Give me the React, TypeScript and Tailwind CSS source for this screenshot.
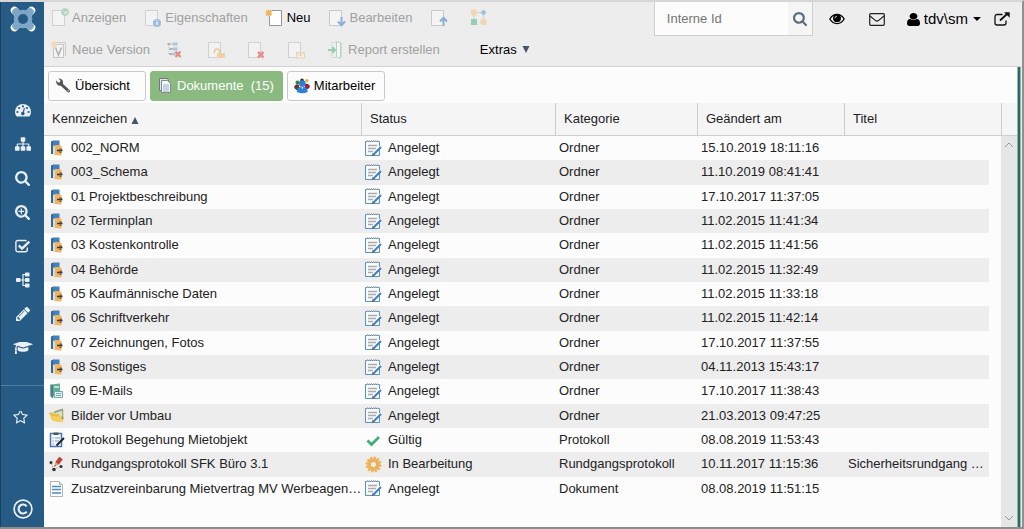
import type { ReactNode } from 'react';

interface IconProps {
  className?: string;
}

interface Row {
  icon: ReactNode;
  name: string;
  status: 'Angelegt' | 'Gültig' | 'In Bearbeitung';
  category: string;
  changed: string;
  title?: string;
}

/* Sidebar icons */

function Logo() {
  return (
    <svg viewBox="0 0 26 26" className="size-[26px]">
      <path d="M4.500 4.500l17 17M21.500 4.500l-17 17" stroke="#fff" strokeWidth="7.500" strokeLinecap="round" />
      <path d="M6 6l14 14M20 6L6 20" stroke="#7ea6c6" strokeWidth="7.500" strokeLinecap="round" />
      <circle cx="13" cy="13" r="9.300" fill="#7ea6c6" />
      <circle cx="13" cy="13" r="5" fill="#265b85" />
    </svg>
  );
}

function GaugeIcon() {
  return (
    <svg viewBox="0 0 16 14" className="h-3.5 w-4">
      <path d="M8 1a8 8 0 0 0-8 8q0 2.200 1.200 4.100.2.300.6.300h12.400q.4 0 .6-.3Q16 11.200 16 9a8 8 0 0 0-8-8z" fill="#e9eff4" />
      <g fill="#265b85">
        <circle cx="2.400" cy="9" r="1.100" />
        <circle cx="4.100" cy="5" r="1.100" />
        <circle cx="8" cy="3.400" r="1.100" />
        <circle cx="11.900" cy="5" r="1.100" />
        <circle cx="13.600" cy="9" r="1.100" />
        <circle cx="7.800" cy="10.600" r="1.800" />
      </g>
      <path d="M8 10.500L9.300 5.500" stroke="#265b85" strokeWidth="1.100" strokeLinecap="round" />
    </svg>
  );
}

function SitemapIcon() {
  return (
    <svg viewBox="0 128 1792 1536" className="h-3.5 w-4" fill="currentColor">
      <path d="M1792 1248v320q0 40-28 68t-68 28h-320q-40 0-68-28t-28-68v-320q0-40 28-68t68-28h96v-192h-512v192h96q40 0 68 28t28 68v320q0 40-28 68t-68 28h-320q-40 0-68-28t-28-68v-320q0-40 28-68t68-28h96v-192h-512v192h96q40 0 68 28t28 68v320q0 40-28 68t-68 28h-320q-40 0-68-28t-28-68v-320q0-40 28-68t68-28h96v-192q0-52 38-90t90-38h512v-192h-96q-40 0-68-28t-28-68v-320q0-40 28-68t68-28h320q40 0 68 28t28 68v320q0 40-28 68t-68 28h-96v192h512q52 0 90 38t38 90v192h96q40 0 68 28t28 68z" />
    </svg>
  );
}

function SearchIcon({ className = 'size-4' }: IconProps) {
  return (
    <svg viewBox="64 128 1664 1664" className={className} fill="currentColor">
      <path d="M1216 832q0-185-131.500-316.500t-316.500-131.500-316.500 131.500-131.500 316.500 131.500 316.500 316.500 131.500 316.500-131.500 131.500-316.500zm512 832q0 52-38 90t-90 38q-54 0-90-38l-343-342q-179 124-399 124-143 0-273.500-55.500t-225-150-150-225-55.500-273.500 55.500-273.500 150-225 225-150 273.500-55.500 273.500 55.500 225 150 150 225 55.500 273.500q0 220-124 399l343 343q37 37 37 90z" />
    </svg>
  );
}

function ZoomInIcon() {
  return (
    <svg viewBox="64 128 1664 1664" className="size-[15px]" fill="currentColor">
      <path d="M1088 800v64q0 13-9.500 22.500t-22.500 9.500h-224v224q0 13-9.500 22.500t-22.500 9.500h-64q-13 0-22.500-9.500t-9.500-22.500v-224h-224q-13 0-22.500-9.500t-9.500-22.500v-64q0-13 9.500-22.500t22.500-9.500h224v-224q0-13 9.500-22.500t22.500-9.500h64q13 0 22.500 9.500t9.500 22.500v224h224q13 0 22.500 9.500t9.500 22.500zm128 32q0-185-131.500-316.500t-316.500-131.500-316.500 131.500-131.500 316.500 131.500 316.500 316.500 131.500 316.500-131.500 131.500-316.500zm512 832q0 53-37.500 90.500t-90.500 37.500q-54 0-90-38l-343-342q-179 124-399 124-143 0-273.500-55.500t-225-150-150-225-55.500-273.500 55.500-273.500 150-225 225-150 273.500-55.500 273.500 55.500 225 150 150 225 55.500 273.500q0 220-124 399l343 343q37 37 37 90z" />
    </svg>
  );
}

function CheckSquareIcon() {
  return (
    <svg viewBox="0 0 16 14" className="h-3.5 w-4" fill="none" stroke="currentColor">
      <path d="M12.300 8.500v2.300a2 2 0 0 1-2 2H2.900a2 2 0 0 1-2-2V3.500a2 2 0 0 1 2-2h7.400q.6 0 1.200.3" strokeWidth="1.400" />
      <path d="M3.700 6.300l3.300 3.300L14.300 2.600" strokeWidth="2.400" />
    </svg>
  );
}

function TreeIcon() {
  return (
    <svg viewBox="0 0 16 16" className="size-4" fill="currentColor">
      <rect x="1" y="6" width="4.500" height="4" rx=".8" />
      <rect x="10" y="0.500" width="4.500" height="4" rx=".8" />
      <rect x="10" y="6" width="4.500" height="4" rx=".8" />
      <rect x="10" y="11.500" width="4.500" height="4" rx=".8" />
      <path d="M5 8h6M8 2.500h3M8 13.500h3M8 2v12" fill="none" stroke="currentColor" strokeWidth="1.200" />
    </svg>
  );
}

function PencilIcon() {
  return (
    <svg viewBox="128 149 1515 1515" className="size-3.5" fill="currentColor">
      <path d="M491 1536l91-91-235-235-91 91v107h128v128h107zm523-928q0-22-22-22-10 0-17 7l-542 542q-7 7-7 17 0 22 22 22 10 0 17-7l542-542q7-7 7-17zm-54-192l416 416-832 832h-416v-416zm683 96q0 53-37 90l-166 166-416-416 166-165q36-38 90-38 53 0 91 38l235 234q37 39 37 91z" />
    </svg>
  );
}

function GraduationIcon() {
  return (
    <svg viewBox="0 256 2304 1408" className="h-3 w-5" fill="currentColor">
      <path d="M1774 836l18 316q4 69-82 128t-235 93.500-323 34.500-323-34.500-235-93.500-82-128l18-316 574 181q22 7 48 7t48-7zm530-324q0 23-22 31l-1120 352q-4 1-10 1t-10-1l-652-206q-43 34-71 111.500t-34 178.500q63 36 63 109 0 69-58 107l58 433q2 14-8 25-9 11-24 11h-192q-15 0-24-11-10-11-8-25l58-433q-58-38-58-107 0-73 65-111 11-207 98-330l-333-104q-22-8-22-31t22-31l1120-352q4-1 10-1t10 1l1120 352q22 8 22 31z" />
    </svg>
  );
}

function StarIcon() {
  return (
    <svg viewBox="64 192 1664 1600" className="h-3.5 w-[15px]" fill="currentColor">
      <path d="M1201 1004l306-297-422-62-189-382-189 382-422 62 306 297-73 421 378-199 377 199zm527-357q0 22-26 48l-363 354 86 500q1 7 1 20 0 50-41 50-19 0-40-12l-449-236-449 236q-22 12-40 12-21 0-31.500-14.500t-10.500-35.500q0-6 2-20l86-500-364-354q-25-27-25-48 0-37 56-46l502-73 225-455q19-41 49-41t49 41l225 455 502 73q56 9 56 46z" />
    </svg>
  );
}

function CopyrightIcon() {
  return (
    <svg viewBox="0 0 20 20" className="size-5" fill="none" stroke="currentColor">
      <circle cx="10" cy="10" r="8.900" strokeWidth="1.700" />
      <path d="M13.700 7.300a4.500 4.500 0 1 0 0 5.400" strokeWidth="2.200" />
    </svg>
  );
}

/* Toolbar icons, all drawn on a 20x20 grid */

function Sheet({ children, className = 'opacity-50' }: { children?: ReactNode; className?: string }) {
  return (
    <svg viewBox="0 0 20 20" className={`size-5 shrink-0 ${className}`}>
      <path d="M2.500 2.500h12v15h-12z" fill="#fafafa" stroke="#b4b4b4" />
      {children}
    </svg>
  );
}

const showIcon = (
  <Sheet>
    <circle cx="15" cy="4" r="3.800" fill="#6fba94" />
    <path d="M13 2.500l3.500 3M14 5.500h2.600V3" stroke="#d5efe2" fill="none" />
  </Sheet>
);

const infoIcon = (
  <Sheet>
    <circle cx="14" cy="15" r="4" fill="#4a8cd0" />
    <path d="M14 14v3.200M14 12v1.200" stroke="#fff" strokeWidth="1.400" />
  </Sheet>
);

const newIcon = (
  <svg viewBox="0 0 20 20" className="size-5 shrink-0">
    <path d="M4.500 2.500h12v15h-12z" fill="#fff" stroke="#969696" />
    <circle cx="3.800" cy="5" r="3.400" fill="#ededed" />
    <path d="M3.800 1.500v7M.3 5h7M1.300 2.500l5 5M6.300 2.500l-5 5" stroke="#eba53c" strokeWidth="1.100" />
    <circle cx="3.800" cy="5" r="1.700" fill="#f5b957" />
  </svg>
);

const editIcon = (
  <Sheet className="opacity-60">
    <path d="M14.500 9v8M11 13.500l3.500 3.800 3.500-3.800" stroke="#4a86ca" strokeWidth="2" fill="none" />
  </Sheet>
);

const checkInIcon = (
  <Sheet className="opacity-60">
    <path d="M14.500 18v-8M11 13.500l3.500-3.800 3.500 3.800" stroke="#4a86ca" strokeWidth="2" fill="none" />
  </Sheet>
);

const flowIcon = (
  <svg viewBox="0 0 20 20" className="size-5 shrink-0 opacity-60">
    <path d="M4 4.500h10M13.500 5v9M4 6v8" stroke="#b9c3cc" />
    <circle cx="4" cy="4.500" r="3.200" fill="#f4c48b" />
    <path d="M13.500 1.500l3 3-3 3-3-3z" fill="#6da4d4" />
    <rect x="1" y="11" width="6" height="6" fill="#62b98c" />
    <circle cx="13.500" cy="14" r="3.200" fill="#f4c48b" />
  </svg>
);

const versionIcon = (
  <svg viewBox="0 0 20 20" className="size-5 shrink-0 opacity-60">
    <path d="M5.500 2.500h10v13" fill="none" stroke="#b5b5b5" />
    <path d="M3.500 4.500h10v13h-10z" fill="#fafafa" stroke="#aaa" />
    <path d="M5.500 7.500l3 7.500 3-7.500" stroke="#8c8c8c" strokeWidth="1.600" fill="none" />
    <circle cx="4.500" cy="4.500" r="3" fill="#f5cf98" />
  </svg>
);

const removeStructureIcon = (
  <svg viewBox="0 0 20 20" className="size-5 shrink-0 opacity-60">
    <path d="M3 3v12M3 4h4M3 9h4M3 14h4" stroke="#999" strokeDasharray="1 1" />
    <path d="M6.500 4h5M6.500 9h5M6.500 14h3" stroke="#8aa9c6" strokeWidth="3" />
    <path d="M1.500 4h3M3.500 9h3M3.500 14h3" stroke="#888" strokeWidth="2" />
    <path d="M9.500 11.500l5 5.500M14.500 11.500l-5 5.500" stroke="#de4a3f" strokeWidth="2.200" />
  </svg>
);

const unlockIcon = (
  <Sheet>
    <path d="M8.500 13v-1.500a2.500 2.500 0 0 1 5 0V14" stroke="#eca94c" strokeWidth="1.500" fill="none" />
    <rect x="11" y="13" width="8" height="5" fill="#f3b661" />
  </Sheet>
);

const deleteIcon = (
  <Sheet>
    <path d="M12 12l5.500 5.500M17.500 12L12 17.500" stroke="#db3a30" strokeWidth="2.500" />
  </Sheet>
);

const mailIcon = (
  <Sheet>
    <path d="M10.500 12.500h8v5.500h-8zM10.500 12.500l4 3.500 4-3.500" stroke="#efb870" fill="#fdf3e0" />
  </Sheet>
);

const reportIcon = (
  <svg viewBox="0 0 20 20" className="size-5 shrink-0 opacity-50">
    <path d="M5.500 6V2.500h5M5.500 14v3.500h5M15.500 3v14.500" stroke="#b5b5b5" fill="none" strokeDasharray="2 1" />
    <path d="M10.500 1.500l4 1.500v15l-4-1z" fill="#fff" stroke="#7abf9c" />
    <path d="M2 10h7M6 7l3 3-3 3" stroke="#46aa79" strokeWidth="2" fill="none" />
  </svg>
);

/* Tab icons */

const wrenchIcon = (
  <svg viewBox="0 0 16 16" className="size-4 shrink-0">
    <path d="M6.500 6.500l7 6.500" stroke="#555" strokeWidth="3" strokeLinecap="round" />
    <path d="M.8 2.200L3.200 4.600 5 4.200 5.300 2.300 3.300.4Q7 .2 8 3.400 8.500 6.500 5.500 7.800 1.500 8 .8 2.200z" fill="#555" />
    <circle cx="13.200" cy="12.700" r=".7" fill="#ccc" />
  </svg>
);

const documentTabIcon = (
  <svg viewBox="0 0 16 16" className="size-4 shrink-0">
    <path d="M2.500.5h8l1 2v10h-9z" fill="#dce8ee" stroke="#777" />
    <path d="M4.500 2.500h6l3 3v9h-9z" fill="#f4f8fb" stroke="#888" />
    <path d="M6 7h6M6 9h6M6 11h6M6 13h6" stroke="#8fb3d4" />
  </svg>
);

const peopleIcon = (
  <svg viewBox="0 0 16 16" className="size-4 shrink-0">
    <circle cx="3.500" cy="4.500" r="2" fill="#35843b" />
    <circle cx="8" cy="2.300" r="1.800" fill="#333" />
    <circle cx="12.800" cy="2.700" r="1.800" fill="#e3bd35" />
    <path d="M0 9q2-4 5-2v4H1z" fill="#8d2029" />
    <path d="M11 6q4-1 5 3l-2 2h-3z" fill="#a3203e" />
    <path d="M1 9h4v3H2z" fill="#23642e" />
    <circle cx="8.300" cy="5.500" r="3.300" fill="#2e7fd6" />
    <path d="M3 14q-.5-5.500 5.300-5.500T13.500 14q-5 2.500-10.500 0z" fill="#2e7fd6" />
    <path d="M7.400 9h1.700l-.9 2.500z" fill="#fff" />
  </svg>
);

/* Table icons */

const folderIcon = (
  <svg viewBox="0 0 16 16" className="size-4 shrink-0">
    <path d="M2 1.500l2.500-1v13.500L2 14z" fill="#2e68a5" />
    <path d="M4 .5h6.500v13H4z" fill="#4580bd" />
    <path d="M5.500 5h5l2 1v9.500l-7-.5z" fill="#f0b55e" />
    <path d="M4 5.500l2 1v9L4 14.500z" fill="#dcdcdc" />
    <path d="M8 10.500h5.500" stroke="#3c3a3a" strokeWidth="1.600" />
    <path d="M10.500 8.500h2.500v1.500h-2.500zM10.500 11.500h2V13h-2z" fill="#75603f" />
  </svg>
);

const mailFolderIcon = (
  <svg viewBox="0 0 16 16" className="size-4 shrink-0">
    <path d="M1.500 1.500L11 .5v13H3.500l-2-1.500z" fill="#68ad91" />
    <path d="M1.500 1.500l2.500 1v13L1.500 13.500z" fill="#417f92" />
    <path d="M5 4h5" stroke="#d8eee4" strokeWidth="1.500" />
    <path d="M5.500 8.500h8v6h-8zM7 10.500h5M7 12.500h5" fill="#e9f4f2" stroke="#6fa9a5" />
  </svg>
);

const picturesIcon = (
  <svg viewBox="0 0 16 16" className="size-4 shrink-0">
    <path d="M5 3.500l9-3 .5 11-7 2z" fill="#8f9c76" />
    <path d="M6 5l7-2.500.5 6-7 1z" fill="#d8e2bf" />
    <path d="M0 4.500h4l1.500 2L10 6l2 8-9-2z" fill="#e9bb42" />
    <path d="M0 4.500L3 8l9 .5 2.500 6L4 13z" fill="#f5cf5b" />
  </svg>
);

const protocolIcon = (
  <svg viewBox="0 0 16 16" className="size-4 shrink-0">
    <path d="M1.500 1.500h11v13h-11z" fill="#f5f8fc" stroke="#4b76b1" strokeWidth="1.500" />
    <path d="M4.500.5h5V3h-5z" fill="#555" />
    <path d="M3.500 6h1.500M6 6h5M3.500 9h1.500M6 9h4M3.500 12h1.500" stroke="#6f9fcd" strokeWidth="1.200" />
    <path d="M7.500 13.500L15 6" stroke="#222" strokeWidth="2" />
  </svg>
);

const inspectionIcon = (
  <svg viewBox="0 0 16 16" className="size-4 shrink-0">
    <path d="M2 6.500l2.500 7L12 10" stroke="#999" strokeDasharray="1 1" fill="none" />
    <circle cx="2" cy="6.500" r="1.500" fill="#333" />
    <circle cx="5" cy="13.500" r="1.800" fill="#333" />
    <circle cx="12" cy="10.500" r="1.600" fill="#333" />
    <path d="M8 7.500L12 2" stroke="#bf4438" strokeWidth="4.500" />
    <path d="M5.500 10.500l.7-4.500L9.700 8.500z" fill="#d9a47b" />
    <path d="M5.300 10.800l.4-1.800 1.100.8z" fill="#333" />
  </svg>
);

const documentIcon = (
  <svg viewBox="0 0 16 16" className="size-4 shrink-0">
    <path d="M1.500.5h9l3 3v12h-12z" fill="#fff" stroke="#b1b5b9" />
    <path d="M10.500.5v3h3" fill="#eee" stroke="#b1b5b9" />
    <path d="M3 5.500h9M3 8.500h9M3 12h9" stroke="#4e8ac4" strokeWidth="1.600" />
  </svg>
);

const statusIcons = {
  Angelegt: (
    <svg viewBox="0 0 17 17" className="size-[17px] shrink-0">
      <path d="M14.500 9v6.500h-14v-14h14V6" fill="#f8fafc" stroke="#5590cf" />
      <path d="M2 1h12" stroke="#b5b5b5" strokeWidth="2" strokeDasharray="1 1" />
      <path d="M3 5.500h9M3 8.500h8M3 11.500h5" stroke="#ababab" strokeWidth="1.600" />
      <path d="M8.500 14.500L16 7" stroke="#3f7fc5" strokeWidth="2" />
      <path d="M6.500 16l1.200-3 2 2z" fill="#666" />
    </svg>
  ),
  Gültig: (
    <svg viewBox="0 0 17 17" className="size-[17px] shrink-0">
      <path d="M2.500 8.500l4 4L14 5" fill="none" stroke="#43ab7c" strokeWidth="2.700" />
    </svg>
  ),
  'In Bearbeitung': (
    <svg viewBox="0 0 17 17" className="size-[17px] shrink-0">
      <circle cx="8.500" cy="8.500" r="4.500" fill="none" stroke="#edb35c" strokeWidth="4" />
      <circle cx="8.500" cy="8.500" r="6.900" fill="none" stroke="#edb35c" strokeWidth="2.200" strokeDasharray="2.160 1.450" />
    </svg>
  ),
};

const sidebarItems = [
  { label: 'Dashboard', icon: <GaugeIcon /> },
  { label: 'Struktur', icon: <SitemapIcon /> },
  { label: 'Suche', icon: <SearchIcon className="size-[15px]" /> },
  { label: 'Erweiterte Suche', icon: <ZoomInIcon /> },
  { label: 'Aufgaben', icon: <CheckSquareIcon /> },
  { label: 'Prozesse', icon: <TreeIcon /> },
  { label: 'Bearbeiten', icon: <PencilIcon /> },
  { label: 'Schulung', icon: <GraduationIcon /> },
];

const rows: Row[] = [
  { icon: folderIcon, name: '002_NORM', status: 'Angelegt', category: 'Ordner', changed: '15.10.2019 18:11:16' },
  { icon: folderIcon, name: '003_Schema', status: 'Angelegt', category: 'Ordner', changed: '11.10.2019 08:41:41' },
  { icon: folderIcon, name: '01 Projektbeschreibung', status: 'Angelegt', category: 'Ordner', changed: '17.10.2017 11:37:05' },
  { icon: folderIcon, name: '02 Terminplan', status: 'Angelegt', category: 'Ordner', changed: '11.02.2015 11:41:34' },
  { icon: folderIcon, name: '03 Kostenkontrolle', status: 'Angelegt', category: 'Ordner', changed: '11.02.2015 11:41:56' },
  { icon: folderIcon, name: '04 Behörde', status: 'Angelegt', category: 'Ordner', changed: '11.02.2015 11:32:49' },
  { icon: folderIcon, name: '05 Kaufmännische Daten', status: 'Angelegt', category: 'Ordner', changed: '11.02.2015 11:33:18' },
  { icon: folderIcon, name: '06 Schriftverkehr', status: 'Angelegt', category: 'Ordner', changed: '11.02.2015 11:42:14' },
  { icon: folderIcon, name: '07 Zeichnungen, Fotos', status: 'Angelegt', category: 'Ordner', changed: '17.10.2017 11:37:55' },
  { icon: folderIcon, name: '08 Sonstiges', status: 'Angelegt', category: 'Ordner', changed: '04.11.2013 15:43:17' },
  { icon: mailFolderIcon, name: '09 E-Mails', status: 'Angelegt', category: 'Ordner', changed: '17.10.2017 11:38:43' },
  { icon: picturesIcon, name: 'Bilder vor Umbau', status: 'Angelegt', category: 'Ordner', changed: '21.03.2013 09:47:25' },
  { icon: protocolIcon, name: 'Protokoll Begehung Mietobjekt', status: 'Gültig', category: 'Protokoll', changed: '08.08.2019 11:53:43' },
  {
    icon: inspectionIcon,
    name: 'Rundgangsprotokoll SFK Büro 3.1',
    status: 'In Bearbeitung',
    category: 'Rundgangsprotokoll',
    changed: '10.11.2017 11:15:36',
    title: 'Sicherheitsrundgang …',
  },
  {
    icon: documentIcon,
    name: 'Zusatzvereinbarung Mietvertrag MV Werbeagen…',
    status: 'Angelegt',
    category: 'Dokument',
    changed: '08.08.2019 11:51:15',
  },
];

function ToolButton({ icon, label, text, active = false }: { icon: ReactNode; label: string; text?: boolean; active?: boolean }) {
  return (
    <button
      type="button"
      aria-label={label}
      disabled={!active}
      className={`flex min-w-6 items-center gap-0.5 whitespace-nowrap ${active ? 'text-black' : 'text-[#a0a0a0]'}`}
    >
      {icon}
      {text && label}
    </button>
  );
}

function Sidebar() {
  return (
    <nav className="flex w-11 shrink-0 flex-col border-l border-[#1b3f5d] bg-[#265b85] text-[#e9eff4]">
      <div className="flex h-[91px] justify-center pt-1">
        <Logo />
      </div>
      {sidebarItems.map((item) => (
        <button key={item.label} type="button" aria-label={item.label} className="flex h-[34px] items-center justify-center">
          {item.icon}
        </button>
      ))}
      <div className="mt-5 flex flex-1 flex-col justify-between border-t border-[#4e7da2] pt-5 pb-2">
        <button type="button" aria-label="Favoriten" className="flex h-6 items-center pl-3">
          <StarIcon />
        </button>
        <button type="button" aria-label="Copyright" className="flex items-center justify-center">
          <CopyrightIcon />
        </button>
      </div>
    </nav>
  );
}

function Toolbar() {
  return (
    <header className="flex h-[65px] shrink-0 justify-between border-b border-[#d2d2d2] bg-[#ededed] pl-1.5">
      <div>
        <div className="flex h-8 items-center gap-[17px]">
          <ToolButton icon={showIcon} label="Anzeigen" text />
          <ToolButton icon={infoIcon} label="Eigenschaften" text />
          <ToolButton icon={newIcon} label="Neu" text active />
          <ToolButton icon={editIcon} label="Bearbeiten" text />
          <ToolButton icon={checkInIcon} label="Einchecken" />
          <ToolButton icon={flowIcon} label="Workflow" />
        </div>
        <div className="flex h-8 items-center gap-4">
          <ToolButton icon={versionIcon} label="Neue Version" text />
          <ToolButton icon={removeStructureIcon} label="Aus Struktur entfernen" />
          <ToolButton icon={unlockIcon} label="Entsperren" />
          <ToolButton icon={deleteIcon} label="Löschen" />
          <ToolButton icon={mailIcon} label="Senden" />
          <ToolButton icon={reportIcon} label="Report erstellen" text />
          <button type="button" className="flex items-center gap-1 pl-6 text-black">
            Extras
            <svg viewBox="0 0 10 8" className="h-2 w-2.5" fill="#46566a">
              <path d="M1.500 0h7L5 7z" />
            </svg>
          </button>
        </div>
      </div>

      <div className="flex h-[34px] items-center pr-3">
        <div className="flex h-full border border-t-0 border-[#cfcfcf] bg-[#fcfcfc]">
          <input
            type="text"
            aria-label="Interne Id"
            placeholder="Interne Id"
            className="w-[133px] bg-transparent pl-3 placeholder:text-[#757575] focus:outline-none"
          />
          <button type="button" aria-label="Suchen" className="flex w-6 items-center justify-center bg-[#f5f5f5] text-[#5d6b7d]">
            <SearchIcon className="size-3.5" />
          </button>
        </div>
        <button type="button" aria-label="Ansicht" className="ml-4">
          <svg viewBox="0 0 16 12" className="h-3 w-4">
            <path d="M.8 6Q3.500 1.400 8 1.400T15.200 6Q12.500 10.600 8 10.600T.8 6z" fill="#ededed" stroke="#000" strokeWidth="1.300" />
            <circle cx="8" cy="5.200" r="3.900" />
            <path d="M6 5.200a2 2 0 0 1 2-2" fill="none" stroke="#ededed" strokeWidth=".8" />
          </svg>
        </button>
        <button type="button" aria-label="Nachrichten" className="ml-6">
          <svg viewBox="0 0 16 13" className="h-[13px] w-4" fill="none" stroke="#222" strokeWidth="1.200">
            <rect x=".7" y=".7" width="14.600" height="11.600" rx="1" />
            <path d="M1 3l5.600 4.600q1.400 1 2.800 0L15 3" />
          </svg>
        </button>
        <button type="button" className="ml-[22px] flex items-center gap-1 text-[15px] text-black">
          <svg viewBox="256 128 1280 1536" className="h-[13px] w-[13px]" preserveAspectRatio="none" fill="currentColor">
            <path d="M1536 1399q0 109-62.500 187t-150.500 78h-854q-88 0-150.500-78t-62.500-187q0-85 8.500-160.500t31.500-152 58.500-131 94-89 134.500-34.500q131 128 313 128t313-128q76 0 134.500 34.500t94 89 58.500 131 31.500 152 8.500 160.500zm-256-887q0 159-112.500 271.500t-271.500 112.500-271.500-112.500-112.500-271.500 112.500-271.500 271.500-112.500 271.500 112.500 112.500 271.500z" />
          </svg>
          tdv\sm
          <svg viewBox="0 0 10 6" className="h-1.5 w-2.5" fill="currentColor">
            <path d="M1 1h8L5 5z" />
          </svg>
        </button>
        <button type="button" aria-label="In neuem Fenster öffnen" className="ml-3">
          <svg viewBox="0 0 16 14" className="h-3.5 w-4" fill="none" stroke="#111">
            <path d="M8.500 2.500H3a2 2 0 0 0-2 2V11a2 2 0 0 0 2 2h7a2 2 0 0 0 2-2V8.500" strokeWidth="1.300" />
            <path d="M6 8.500l7-6.500" strokeWidth="1.800" />
            <path d="M10 .2h5.700v5.600z" fill="#111" stroke="none" />
          </svg>
        </button>
      </div>
    </header>
  );
}

function Tabs() {
  const base = 'flex h-[30px] items-center gap-1 rounded-[3px] border pr-2 pl-1.5';
  return (
    <div className="flex shrink-0 gap-1 px-1 pt-1 pb-0.5">
      <button type="button" className={`${base} min-w-[98px] border-[#c9c9c9] text-black`}>
        {wrenchIcon}
        Übersicht
      </button>
      <button type="button" className={`${base} border-[#8aba80] bg-[#8aba80] text-white`}>
        {documentTabIcon}
        <span className="whitespace-pre">Dokumente  (15)</span>
      </button>
      <button type="button" className={`${base} min-w-[98px] border-[#c9c9c9] text-black`}>
        {peopleIcon}
        Mitarbeiter
      </button>
    </div>
  );
}

function DocumentTable() {
  const th = 'h-[33px] border-b border-[#cecece] bg-[#f5f5f5] px-2 text-left font-normal';
  return (
    <div className="flex min-h-0 flex-1">
      <div className="min-w-0 flex-1">
        <table className="h-[398px] w-full table-fixed border-separate border-spacing-0">
          <colgroup>
            <col className="w-[317px]" />
            <col className="w-[194px]" />
            <col className="w-[142px]" />
            <col className="w-[147px]" />
            <col />
            <col className="w-3" />
          </colgroup>
          <thead>
            <tr>
              <th className={th}>
                <span className="flex items-center gap-1">
                  Kennzeichen
                  <svg viewBox="0 0 8 9" className="h-[9px] w-2" fill="#46566a">
                    <path d="M4 2l3.500 7h-7z" />
                  </svg>
                </span>
              </th>
              <th className={`${th} border-l`}>Status</th>
              <th className={`${th} border-l`}>Kategorie</th>
              <th className={`${th} border-l`}>Geändert am</th>
              <th className={`${th} border-l`} colSpan={2}>
                Titel
              </th>
            </tr>
          </thead>
          <tbody>
            {rows.map((row, i) => {
              const td = `whitespace-nowrap pl-1 leading-5 ${i % 2 ? 'bg-[#ededed]' : ''}`;
              return (
                <tr key={row.name}>
                  <td className={td}>
                    <div className="flex items-center gap-1.5 pl-px">
                      {row.icon}
                      {row.name}
                    </div>
                  </td>
                  <td className={td}>
                    <div className="flex items-center gap-1.5">
                      {statusIcons[row.status]}
                      {row.status}
                    </div>
                  </td>
                  <td className={td}>{row.category}</td>
                  <td className={td}>{row.changed}</td>
                  <td className={td}>{row.title}</td>
                  <td />
                </tr>
              );
            })}
          </tbody>
        </table>
      </div>

      {/* Scrollbar */}
      <div className="flex w-4 shrink-0 flex-col">
        <div className="h-[33px] border-b border-l border-[#cecece] bg-[#f5f5f5]" />
        <div className="flex flex-1 flex-col items-center justify-between bg-[#e6e6e6] py-1.5">
          <svg viewBox="0 0 10 6" className="h-1.5 w-2.5" fill="none" stroke="#999">
            <path d="M1 5l4-4 4 4" />
          </svg>
          <svg viewBox="0 0 10 6" className="h-1.5 w-2.5" fill="none" stroke="#999">
            <path d="M1 1l4 4 4-4" />
          </svg>
        </div>
      </div>
    </div>
  );
}

export default function App() {
  return (
    <div className="flex h-screen border-t-2 border-r-2 border-b-2 border-t-[#d6d6d6] border-r-[#909090] border-b-[#8c8c8c] bg-[#fcfcfc] font-['Liberation_Sans',Arial,sans-serif] text-[13px] text-[#222]">
      <Sidebar />
      <div className="flex min-w-0 flex-1 flex-col">
        <Toolbar />
        <div className="flex min-h-0 flex-1">
          <main className="flex min-w-0 flex-1 flex-col">
            <Tabs />
            <DocumentTable />
          </main>
          <div className="w-1 shrink-0 border-x border-[#8fbf8f] bg-[#2b6480]" />
          <div className="w-px shrink-0 bg-[#ededed]" />
        </div>
      </div>
    </div>
  );
}
